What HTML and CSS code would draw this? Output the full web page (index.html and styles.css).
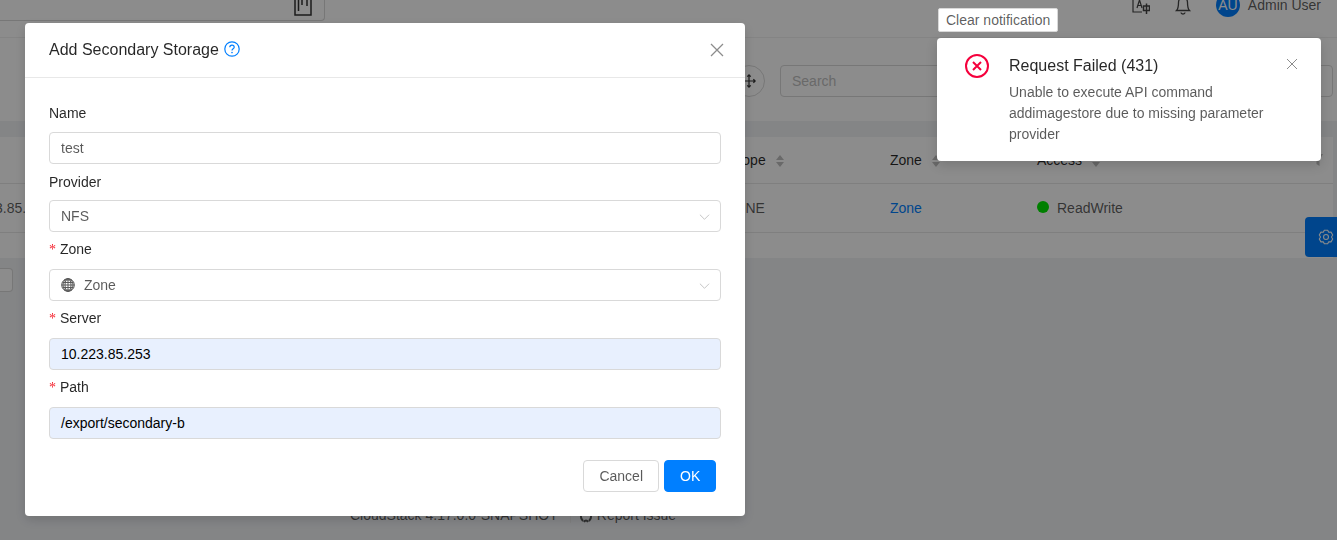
FILE: index.html
```html
<!DOCTYPE html>
<html lang="en">
<head>
<meta charset="utf-8">
<title>Add Secondary Storage</title>
<link rel="stylesheet" href="styles.css">
</head>
<body>
<div class="app">
  <header class="topbar">
    <div class="top-search">
      <svg class="kanban" viewBox="0 0 18 16"><path d="M1 0v15h16V0M4.500 0v11M8 0v5M13 0v6" fill="none" stroke="currentColor" stroke-width="1.500"/></svg>
    </div>
    <div class="top-actions">
      <svg class="lang" viewBox="0 0 18 20"><path d="M1 0v17h9M5 13l2.500-8 2.500 8M6 10.500h3" fill="none" stroke="currentColor" stroke-width="1.200"/><path d="M11.500 11h6v4.500h-6zM14.500 8.500V19" fill="none" stroke="currentColor" stroke-width="1.500"/></svg>
      <svg class="bell" viewBox="0 0 18 20"><path d="M2.500 15.500c2-2 2-4 2-8 0-3 2-5.500 4.500-5.500s4.500 2.500 4.500 5.500c0 4 0 6 2 8zM7 17.500c0 2 4 2 4 0" fill="none" stroke="currentColor" stroke-width="1.300"/></svg>
      <div class="avatar">AU</div>
      <span class="username">Admin User</span>
    </div>
  </header>
  <section class="toolbar">
    <div class="round-btn">
      <svg class="move" viewBox="0 0 16 16"><path d="M8 1v14M1 8h14M6 3l2-2 2 2M6 13l2 2 2-2M3 6L1 8l2 2M13 6l2 2-2 2" fill="none" stroke="currentColor" stroke-width="1.400"/></svg>
    </div>
    <div class="search">Search</div>
  </section>
  <section class="table-card">
    <div class="row head">
      <span class="cell c-ip"></span>
      <span class="cell c-scope">Scope<i class="sort"></i></span>
      <span class="cell c-zone">Zone<i class="sort"></i></span>
      <span class="cell c-access">Access<i class="sort"></i></span>
      <svg class="filter" viewBox="0 0 10 12"><path d="M0 0h10L6.500 6v6L3.500 10V6z" fill="currentColor"/></svg>
    </div>
    <div class="row body">
      <span class="cell c-ip">10.223.85.253</span>
      <span class="cell c-scope">ZONE</span>
      <span class="cell c-zone"><a class="link">Zone</a></span>
      <span class="cell c-access"><i class="dot"></i>ReadWrite</span>
    </div>
  </section>
  <div class="pager"><div class="page-btn"></div></div>
  <footer class="footer">
    <span>CloudStack 4.17.0.0-SNAPSHOT</span>
    <span class="divider"></span>
    <svg class="gh" viewBox="0 0 14 14"><path d="M4 1C1 3 1 9 4 12M10 1c3 2 3 8 0 11M5 13c1-2 3-2 4 0" fill="none" stroke="currentColor" stroke-width="2"/></svg>
    <span>Report Issue</span>
  </footer>
</div>
<button class="gear">
  <svg viewBox="0 0 24 24"><path d="M9.460 1.800H14.540L16.100 4.900 19.550 4.700 22.100 9.100 20.200 12 22.100 14.900 19.550 19.300 16.100 19.100 14.540 22.200H9.460L7.900 19.100 4.450 19.300 1.900 14.900 3.800 12 1.900 9.100 4.450 4.700 7.900 4.900z" fill="none" stroke="currentColor" stroke-width="1.600" stroke-linejoin="round"/><circle cx="12" cy="12" r="3.700" fill="none" stroke="currentColor" stroke-width="1.600"/></svg>
</button>
<div class="overlay"></div>

<div class="modal">
  <div class="modal-head">
    <span class="modal-title">Add Secondary Storage</span>
    <svg class="help" viewBox="0 0 16 16"><circle cx="8" cy="8" r="7.200" fill="none" stroke="currentColor" stroke-width="1.200"/><path d="M5.800 6.300C5.800 5 6.800 4.200 8 4.200s2.200.8 2.200 2c0 1.700-2.200 1.600-2.200 3.400" fill="none" stroke="currentColor" stroke-width="1.200"/><circle cx="8" cy="11.600" r=".8" fill="currentColor"/></svg>
    <svg class="modal-close" viewBox="0 0 14 14"><path d="M1 1l12 12M13 1L1 13" fill="none" stroke="currentColor" stroke-width="1.300"/></svg>
  </div>
  <form class="modal-body">
    <div class="field">
      <label class="label plain">Name</label>
      <div class="control">test</div>
    </div>
    <div class="field">
      <label class="label plain">Provider</label>
      <div class="control select">NFS<svg class="chev" viewBox="0 0 12 8"><path d="M1 1.500l5 5 5-5" fill="none" stroke="currentColor" stroke-width="1"/></svg></div>
    </div>
    <div class="field">
      <label class="label"><span class="req">*</span>Zone</label>
      <div class="control select">
        <svg class="globe" viewBox="0 0 14 14"><g fill="none" stroke="currentColor" stroke-width="1"><circle cx="7" cy="7" r="6.300"/><ellipse cx="7" cy="7" rx="3" ry="6.300"/><ellipse cx="7" cy="7" rx="5" ry="6.300"/><path d="M7 .7v12.600M.7 7h12.600M1.500 4.500h11M1.500 9.500h11M3 2h8M3 12h8"/></g></svg>Zone<svg class="chev" viewBox="0 0 12 8"><path d="M1 1.500l5 5 5-5" fill="none" stroke="currentColor" stroke-width="1"/></svg>
      </div>
    </div>
    <div class="field">
      <label class="label"><span class="req">*</span>Server</label>
      <div class="control filled">10.223.85.253</div>
    </div>
    <div class="field">
      <label class="label"><span class="req">*</span>Path</label>
      <div class="control filled">/export/secondary-b</div>
    </div>
    <div class="actions">
      <button type="button" class="btn">Cancel</button>
      <button type="button" class="btn primary">OK</button>
    </div>
  </form>
</div>

<div class="clear-note">Clear notification</div>
<div class="notification">
  <svg class="err" viewBox="0 0 24 24"><circle cx="12" cy="12" r="11" fill="none" stroke="currentColor" stroke-width="2"/><path d="M8 8l8 8M16 8l-8 8" fill="none" stroke="currentColor" stroke-width="2"/></svg>
  <div class="note-text">
    <div class="note-title">Request Failed (431)</div>
    <div class="note-desc">Unable to execute API command addimagestore due to missing parameter provider</div>
  </div>
  <svg class="note-close" viewBox="0 0 12 12"><path d="M1 1l10 10M11 1L1 11" fill="none" stroke="currentColor" stroke-width="1"/></svg>
</div>
</body>
</html>
```
FILE: styles.css
```css
* { box-sizing: border-box; }
html, body { margin: 0; height: 540px; overflow: hidden; }
body {
  font-family: "Liberation Sans", Arial, sans-serif;
  font-size: 14px;
  color: rgba(0,0,0,.65);
  background: #f0f2f5;
  position: relative;
}
.app { display: flex; flex-direction: column; height: 540px; overflow: hidden; }

.topbar {
  height: 38px;
  flex: none;
  background: #fff;
  border-bottom: 1px solid #f0f0f0;
  display: flex;
  justify-content: space-between;
  align-items: flex-start;
}
.top-search {
  width: 325px;
  height: 21px;
  border: 1px solid #d9d9d9;
  border-top: 0;
  border-left: 0;
  border-radius: 0 0 4px 0;
  padding-left: 294px;
}
.kanban { width: 18px; height: 16px; display: block; color: #333; }
.top-actions { display: flex; align-items: center; height: 10px; padding-right: 16px; }
.lang { width: 18px; height: 20px; color: #444; margin-right: 24px; flex: none; }
.bell { width: 18px; height: 20px; margin-right: 24px; color: #444; flex: none; }
.avatar {
  width: 24px; height: 24px; border-radius: 50%;
  background: #007fff; color: #fff; text-align: center; line-height: 24px;
  margin-right: 8px; flex: none;
}
.username { line-height: 12px; }

.toolbar {
  height: 83px;
  flex: none;
  background: #fff;
  display: flex;
  align-items: center;
  padding: 3px 4px 0 733px;
  gap: 15px;
}
.round-btn {
  width: 32px; height: 32px; border: 1px solid #d9d9d9; border-radius: 50%;
  display: flex; align-items: center; justify-content: center; flex: none;
}
.move { width: 14px; height: 16px; color: #333; }
.search {
  flex: 1;
  height: 32px;
  border: 1px solid #d9d9d9;
  border-radius: 4px;
  padding: 0 11px;
  line-height: 30px;
  color: #bfbfbf;
}

.table-card { margin: 16px 4px 0 0; background: #fff; height: 121px; flex: none; overflow: hidden; }
.row { display: flex; align-items: center; border-bottom: 1px solid #e8e8e8; position: relative; }
.head { height: 47px; color: rgba(0,0,0,.85); }
.head .cell { display: flex; align-items: center; }
.body { height: 49px; }
.c-ip { width: 726px; text-indent: -40px; white-space: nowrap; }
.c-scope { width: 164px; }
.c-zone { width: 147px; }
.c-access { flex: 1; }
.sort {
  display: flex; flex-direction: column; justify-content: space-between;
  width: 8px; height: 12px; margin: 2px 0 0 10px;
}
.sort::before, .sort::after {
  content: "";
  border-left: 4px solid transparent;
  border-right: 4px solid transparent;
}
.sort::before { border-bottom: 5px solid #bfbfbf; }
.sort::after { border-top: 5px solid #bfbfbf; }
.filter { position: absolute; right: 10px; top: 17px; width: 10px; height: 12px; color: #bfbfbf; }
.link { color: #007fff; }
.dot {
  display: inline-block; width: 12px; height: 12px; border-radius: 50%;
  background: #00e800; margin-right: 8px; vertical-align: 0;
}

.pager { height: 34px; flex: none; padding-top: 10px; }
.page-btn { width: 13px; height: 24px; border: 1px solid #d9d9d9; border-left: 0; border-radius: 0 4px 4px 0; background: #fff; }

.footer {
  margin-top: auto;
  height: 41px;
  display: flex;
  align-items: flex-start;
  padding: 8px 0 0 350px;
  line-height: 16px;
}
.divider { width: 1px; height: 14px; background: #e8e8e8; margin: 2px 8px 0 12px; }
.gh { width: 14px; height: 14px; margin: 2px 4px 0 0; flex: none; }

.gear {
  position: absolute; left: 1305px; top: 217px; width: 32px; height: 40px;
  background: #007fff; border: 0; border-radius: 4px 0 0 4px; padding: 0 0 0 13px; color: #fff;
  display: flex; align-items: center;
}
.gear svg { width: 16px; height: 16px; flex: none; }

.overlay { position: fixed; inset: 0; background: rgba(0,0,0,.45); }

.modal {
  position: fixed; left: 25px; top: 23px; width: 720px; height: 493px;
  background: #fff; border-radius: 4px; box-shadow: 0 4px 12px rgba(0,0,0,.15);
}
.modal-head {
  height: 55px;
  padding: 0 24px 1px;
  border-bottom: 1px solid #e8e8e8;
  display: flex;
  align-items: center;
  position: relative;
}
.modal-title { font-size: 16px; color: rgba(0,0,0,.85); }
.help { width: 16px; height: 16px; margin: -1px 0 0 5px; color: #007fff; }
.modal-close { position: absolute; right: 21px; top: 20px; width: 14px; height: 14px; color: rgba(0,0,0,.45); }
.modal-body { padding: 16.400px 24px 0; display: flex; flex-direction: column; }
.field { height: 68.800px; }
.label { display: block; height: 37.200px; line-height: 35.500px; color: rgba(0,0,0,.85); }
.plain { line-height: 38.400px; }
.req { color: #f5222d; margin-right: 4px; font-family: "Liberation Serif", serif; }
.control {
  height: 32px;
  width: 672px;
  border: 1px solid #d9d9d9;
  border-radius: 4px;
  padding: 0 11px;
  line-height: 30px;
  display: flex;
  align-items: center;
  position: relative;
}
.filled { background: #e8f0fe; color: #000; }
.chev { position: absolute; right: 10px; top: 12px; width: 11px; height: 8px; color: #bfbfbf; }
.globe { width: 14px; height: 14px; margin-right: 9px; color: #595959; flex: none; }
.actions { display: flex; justify-content: flex-end; gap: 5px; padding-right: 5px; margin-top: 21.600px; }
.btn {
  height: 32px; padding: 0 15px; font: inherit; background: #fff; color: rgba(0,0,0,.65);
  border: 1px solid #d9d9d9; border-radius: 4px;
}
.primary { background: #007fff; border-color: #007fff; color: #fff; width: 52px; }

.clear-note {
  position: fixed; left: 938px; top: 8px; width: 120px; height: 24px;
  background: #fff; border: 1px solid #d9d9d9; border-radius: 2px;
  padding-left: 7px; line-height: 22px;
}
.notification {
  position: fixed; left: 937px; top: 38px; width: 384px; height: 123px;
  background: #fff; border-radius: 4px; box-shadow: 0 4px 12px rgba(0,0,0,.15);
  padding: 16px 24px 0 28px;
  display: flex;
  align-items: flex-start;
}
.err { width: 24px; height: 24px; color: #f5003c; flex: none; margin-right: 20px; }
.note-text { width: 270px; }
.note-title { font-size: 16px; line-height: 24px; color: rgba(0,0,0,.85); margin-bottom: 4px; }
.note-desc { line-height: 21px; }
.note-close { position: absolute; left: 349px; top: 20px; width: 12px; height: 12px; color: rgba(0,0,0,.45); }
```
